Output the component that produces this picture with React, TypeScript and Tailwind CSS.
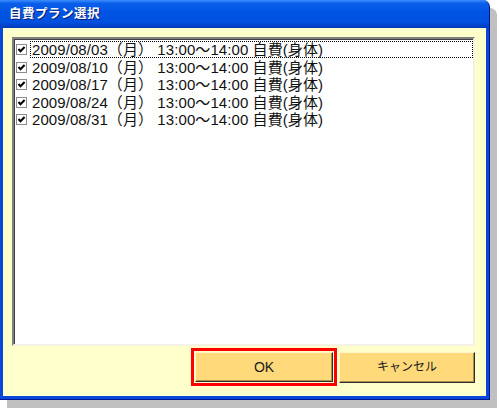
import { useState } from "react";

const plans = [
  "2009/08/03（月） 13:00～14:00 自費(身体)",
  "2009/08/10（月） 13:00～14:00 自費(身体)",
  "2009/08/17（月） 13:00～14:00 自費(身体)",
  "2009/08/24（月） 13:00～14:00 自費(身体)",
  "2009/08/31（月） 13:00～14:00 自費(身体)",
];

function CheckBox({ checked }: { checked: boolean }) {
  return (
    <svg width="11" height="11" viewBox="0 0 11 11" className="shrink-0">
      <rect x="0.5" y="0.5" width="10" height="10" fill="#fff" stroke="#8c8c8c" />
      {checked && <path d="M2.5 5 L4.5 7.3 L8.6 3" fill="none" stroke="#000" strokeWidth="2" />}
    </svg>
  );
}

export default function App() {
  const [checked, setChecked] = useState(plans.map(() => true));

  return (
    <div className="w-[499px] h-[410px] bg-white" style={{ fontFamily: '"Liberation Sans", "Noto Sans CJK JP", sans-serif' }}>
      {/* ダイアログ本体 */}
      <div className="w-[490px] h-[400px] flex flex-col rounded-tr-[7px] overflow-hidden bg-[#0846dc] border-r border-b border-[#00168f] shadow-[7px_8px_0_0_#c0c0c0]">
        {/* タイトルバー */}
        <div className="h-[28px] shrink-0 flex items-center px-[9px] bg-[linear-gradient(to_bottom,#3c8dfd_0%,#0a5fe8_12%,#0054e3_45%,#0050de_80%,#0038b8_100%)]">
          <span className="text-white font-bold text-[12.5px] tracking-[0.5px] [text-shadow:1px_1px_0_#0a1f7a]">自費プラン選択</span>
        </div>

        <div className="flex-1 mx-[3px] mb-[3px] bg-[#ffffcc] flex flex-col">
          {/* リスト */}
          <div className="ml-[9px] mt-[9px] w-[463px] h-[309px] bg-white border-2 border-t-[#808080] border-l-[#808080] border-b-[#f4f2e4] border-r-[#f4f2e4] shadow-[inset_1px_1px_0_#404040] pt-[2px]">
            {plans.map((p, i) => (
              <div key={i} className="h-[17.5px] flex items-center pl-[2px]" onClick={() => setChecked(checked.map((c, j) => (j === i ? !c : c)))}>
                <CheckBox checked={checked[i]} />
                <span
                  className={
                    "ml-[3px] flex-1 h-[17px] flex items-center pl-px text-[15px] tracking-[0.08px] text-[#111] leading-none border border-dotted " +
                    (i === 0 ? "border-black" : "border-transparent")
                  }
                >
                  {p}
                </span>
              </div>
            ))}
          </div>

          {/* ボタン */}
          <div className="mt-[2px] flex items-center justify-end pr-[11px] gap-[2px]">
            <div className="border-[3px] border-[#ff0000] p-px">
              <button className="w-[138px] h-[30px] bg-[#ffd97a] border border-t-[#fff4cc] border-l-[#fff4cc] border-b-[#2e2e2e] border-r-[#2e2e2e] shadow-[inset_-1px_-1px_0_#a88f4e] text-[14px] text-[#1a1a1a]">
                OK
              </button>
            </div>
            <button className="w-[136px] h-[31px] bg-[#ffd97a] border border-t-[#fff4cc] border-l-[#fff4cc] border-b-[#2e2e2e] border-r-[#2e2e2e] shadow-[inset_-1px_-1px_0_#a88f4e] text-[12px] text-[#1a1a1a]">
              キャンセル
            </button>
          </div>
        </div>
      </div>
    </div>
  );
}
